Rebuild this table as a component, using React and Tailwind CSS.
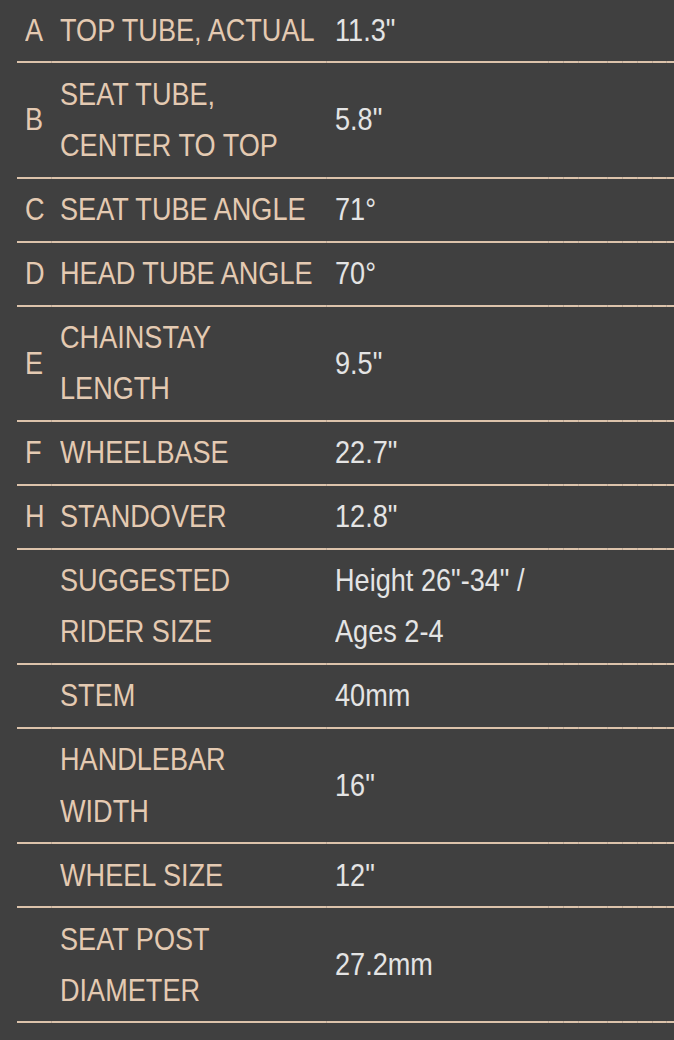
const ROWS = [
    { key: 'A', label: ['TOP TUBE, ACTUAL'], value: ['11.3"'] },
    { key: 'B', label: ['SEAT TUBE,', 'CENTER TO TOP'], value: ['5.8"'] },
    { key: 'C', label: ['SEAT TUBE ANGLE'], value: ['71°'] },
    { key: 'D', label: ['HEAD TUBE ANGLE'], value: ['70°'] },
    { key: 'E', label: ['CHAINSTAY', 'LENGTH'], value: ['9.5"'] },
    { key: 'F', label: ['WHEELBASE'], value: ['22.7"'] },
    { key: 'H', label: ['STANDOVER'], value: ['12.8"'] },
    { key: '', label: ['SUGGESTED', 'RIDER SIZE'], value: ['Height 26"-34" /', 'Ages 2-4'] },
    { key: '', label: ['STEM'], value: ['40mm'] },
    { key: '', label: ['HANDLEBAR', 'WIDTH'], value: ['16"'] },
    { key: '', label: ['WHEEL SIZE'], value: ['12"'] },
    { key: '', label: ['SEAT POST', 'DIAMETER'], value: ['27.2mm'] },
];

// widths of the cells under each rule; the 1px gaps show as faint ticks
const SEGMENTS = ['w-[34px]', 'w-[274px]', 'w-[221px]', 'w-[14px]', 'w-[14px]', 'w-[28px]', 'w-[14px]', 'w-[14px]', 'w-[14px]', 'w-[13px]', 'flex-1'];

function Rule() {
    return (
        <div className="flex h-[2px] gap-px bg-[#bda896]">
            {SEGMENTS.map((w, i) => (
                <div key={i} className={`${w} h-full bg-[#dcc3ab]`} />
            ))}
        </div>
    );
}

// no narrow face is installed, so the regular one is squeezed to Arial Narrow's width
function Line({ children }) {
    return (
        <div className="whitespace-nowrap">
            <span className="inline-block origin-left scale-x-[0.847]">{children}</span>
        </div>
    );
}

function SpecRow({ row }) {
    return (
        <div>
            <div className="grid grid-cols-[34px_275px_1fr] items-center py-[5.4px] leading-[51.2px]">
                <div className="pl-[8px] text-[#e4cab2]">{row.key && <Line>{row.key}</Line>}</div>
                <div className="pl-[9px] text-[#e4cab2]">
                    {row.label.map((line) => (
                        <Line key={line}>{line}</Line>
                    ))}
                </div>
                <div className="pl-[9px] text-[#e4e4e4]">
                    {row.value.map((line) => (
                        <Line key={line}>{line}</Line>
                    ))}
                </div>
            </div>
            <Rule />
        </div>
    );
}

export default function App() {
    return (
        <div className="h-[1040px] overflow-hidden bg-[#404040] pl-[17px] font-['Liberation_Sans',Arial,sans-serif] text-[32px]">
            <div className="-mt-[0.5px]">
                {ROWS.map((row, i) => (
                    <SpecRow key={i} row={row} />
                ))}
            </div>
        </div>
    );
}
